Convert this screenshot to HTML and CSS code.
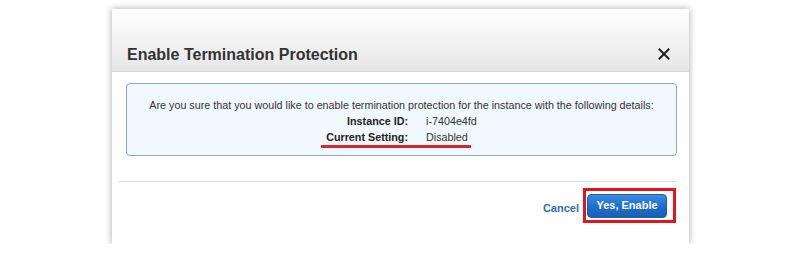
FILE: index.html
```html
<!DOCTYPE html>
<html lang="en">
<head>
    <meta charset="UTF-8">
    <title>Enable Termination Protection</title>
    <link rel="stylesheet" href="styles.css">
</head>
<body>

    <div class="dialog">
        <div class="dialog-header">
            <h2>Enable Termination Protection</h2>
            <button class="close-btn" aria-label="Close">
                <svg width="12" height="12" viewBox="0 0 12 12">
                    <path d="M1.5 1.5 L10.5 10.5 M10.5 1.5 L1.5 10.5" stroke="#222" stroke-width="2" stroke-linecap="square"/>
                </svg>
            </button>
        </div>

        <div class="dialog-body">
            <div class="info-box">
                <p class="intro">Are you sure that you would like to enable termination protection for the instance with the following details:</p>
                <div class="details">
                    <span class="label">Instance ID:</span>
                    <span class="value">i-7404e4fd</span>
                    <span class="label">Current Setting:</span>
                    <span class="value">Disabled</span>
                </div>
                <div class="underline-mark"></div>
            </div>
        </div>

        <div class="dialog-footer">
            <a href="#" class="cancel-link">Cancel</a>
            <span class="highlight-frame">
                <button class="primary-btn">Yes, Enable</button>
            </span>
        </div>
    </div>

</body>
</html>
```

FILE: styles.css
```css
body {
    margin: 0;
    background: #fff;
    font-family: Arial, "Liberation Sans", Helvetica, sans-serif;
    color: #333;
}

.dialog {
    width: 577px;
    height: 235px;
    margin: 9px 0 0 112px;
    background: #fff;
    box-shadow: 0 0 7px rgba(0, 0, 0, 0.35);
    display: flex;
    flex-direction: column;
}

.dialog-header {
    height: 63px;
    box-sizing: border-box;
    padding: 36px 19px 0 15px;
    background: linear-gradient(to bottom, #ffffff 0%, #f4f4f4 45%, #e6e6e6 100%);
    border-bottom: 1px solid #d6d6d6;
    display: flex;
    align-items: flex-start;
    justify-content: space-between;
}

.dialog-header h2 {
    margin: 0;
    font-size: 16px;
    font-weight: bold;
    color: #333;
    line-height: 19px;
}

.close-btn {
    border: none;
    background: none;
    padding: 0;
    margin-top: 3px;
    width: 12px;
    height: 12px;
    cursor: pointer;
    display: flex;
}

.dialog-body {
    padding: 11px 12px 0 14px;
}

.info-box {
    position: relative;
    height: 73px;
    box-sizing: border-box;
    background: #f1f8fd;
    border: 1px solid #8fa6c6;
    border-radius: 4px;
    padding: 13px 0 0 0;
    font-size: 10.75px;
    line-height: 16px;
    color: #333;
}

.intro {
    margin: 0;
    text-align: center;
}

.details {
    display: grid;
    grid-template-columns: 281px auto;
    column-gap: 18px;
}

.details .label {
    text-align: right;
    font-weight: bold;
    color: #222;
}

/* red annotation under the current setting row */
.underline-mark {
    position: absolute;
    left: 194px;
    top: 61px;
    width: 150px;
    height: 3px;
    background: #d8262a;
}

.dialog-footer {
    margin: 25px 19px 0 7px;
    border-top: 1px solid #dcdcdc;
    padding: 6px 0 0 0;
    margin-right: 13px;
    display: flex;
    justify-content: flex-end;
    align-items: center;
    gap: 4px;
}

.cancel-link {
    font-size: 11px;
    font-weight: bold;
    color: #2d6cb5;
    text-decoration: none;
    margin-top: 5px;
}

.highlight-frame {
    border: 3px solid #e3141b;
    padding: 3px 6px 2px 1px;
    display: flex;
}

.primary-btn {
    width: 80px;
    height: 24px;
    border: 1px solid #1d5fae;
    border-radius: 4px;
    background: linear-gradient(to bottom, #3a8ae0 0%, #1f6ccc 55%, #1a5fb6 100%);
    color: #fff;
    font-family: Arial, "Liberation Sans", sans-serif;
    font-size: 11px;
    font-weight: bold;
    padding: 0 0 3px 0;
    cursor: pointer;
}
```
